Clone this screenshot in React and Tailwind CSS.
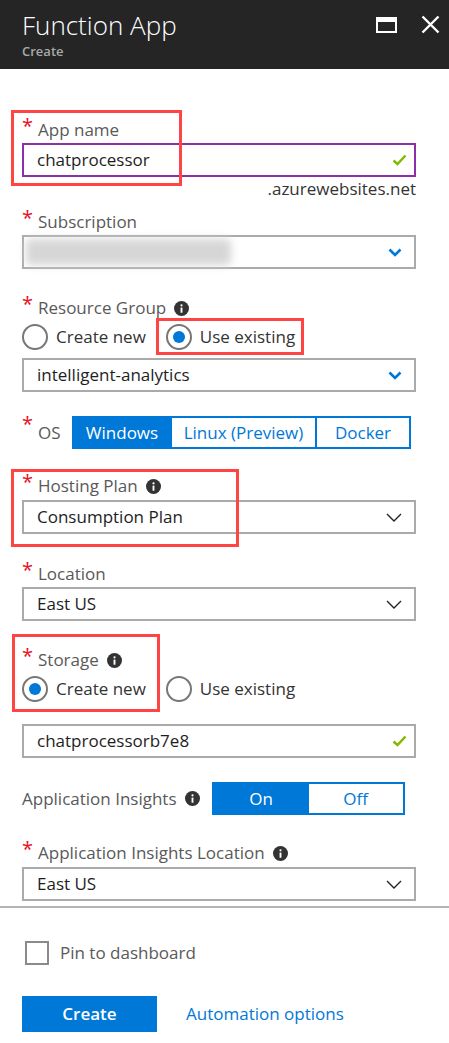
import React from 'react';

const FONT = { fontFamily: '"Segoe UI", "Open Sans", "Noto Sans", sans-serif' };

function Star() {
  return <span className="w-[16px] shrink-0 text-[#e81123] text-[20px] leading-none self-start -mt-[2px]">*</span>;
}

function Info() {
  return (
    <svg width="15" height="15" viewBox="0 0 16 16" className="ml-[8px] shrink-0">
      <circle cx="8" cy="8" r="8" fill="#333" />
      <rect x="7" y="7" width="2" height="5.5" fill="#fff" />
      <circle cx="8" cy="4.6" r="1.2" fill="#fff" />
    </svg>
  );
}

function Check() {
  return (
    <svg width="15" height="12" viewBox="0 0 15 12" className="shrink-0">
      <path d="M1.5 6.5 L5.5 10 L13.5 1.5" fill="none" stroke="#7fba00" strokeWidth="2.4" />
    </svg>
  );
}

function Chevron({ blue }) {
  return blue ? (
    <svg width="14" height="9" viewBox="0 0 14 9" className="shrink-0">
      <path d="M1.5 1.5 L7 7 L12.5 1.5" fill="none" stroke="#0078d7" strokeWidth="2.6" />
    </svg>
  ) : (
    <svg width="16" height="9" viewBox="0 0 16 9" className="shrink-0">
      <path d="M1 1 L8 8 L15 1" fill="none" stroke="#222" strokeWidth="1.4" />
    </svg>
  );
}

function Label({ text, info, star = true }) {
  return (
    <div className="flex items-center h-[24px] text-[17px] text-[#595959]">
      {star && <Star />}
      <span>{text}</span>
      {info && <Info />}
    </div>
  );
}

function Select({ value, blue, blurred }) {
  return (
    <div className="h-[34px] border-2 border-[#aaaaaa] flex items-center pl-[13px] pr-[12px] text-[17px] text-[#1e1e1e]">
      {blurred ? (
        <div className="flex-1 h-full flex items-center -ml-[11px]">
          <div className="h-[26px] w-[205px] bg-[#d6d6d6] blur-[4px] rounded-sm" />
        </div>
      ) : (
        <span className="flex-1">{value}</span>
      )}
      <Chevron blue={blue} />
    </div>
  );
}

function Radio({ on, label }) {
  return (
    <div className="flex items-center">
      <div className="w-[26px] h-[26px] rounded-full border-2 border-[#777] flex items-center justify-center">
        {on && <div className="w-[12px] h-[12px] rounded-full bg-[#0078d7]" />}
      </div>
      <span className="ml-[8px] text-[17px] text-[#333]">{label}</span>
    </div>
  );
}

export default function App() {
  return (
    <div className="w-[449px] h-[1043px] bg-white overflow-hidden" style={FONT}>
      {/* header */}
      <div className="h-[69px] bg-[#252525] flex items-start justify-between pl-[22px] pr-[9px]">
        <div>
          <div className="text-[26px] font-light text-white leading-[30px] mt-[10px]">Function App</div>
          <div className="text-[13px] font-semibold text-[#aaaaaa] leading-[16px] mt-[3px]">Create</div>
        </div>
        <div className="flex items-center gap-[24px] mt-[15px]">
          <div className="w-[21px] h-[16px] border-white border-x-[2px] border-b-[2px] border-t-[5px]" />
          <svg width="19" height="19" viewBox="0 0 19 19">
            <path d="M1.5 1.5 L17.5 17.5 M17.5 1.5 L1.5 17.5" stroke="#fff" strokeWidth="2.4" />
          </svg>
        </div>
      </div>

      <div className="ml-[22px] w-[394px]">
        {/* App name */}
        <div className="relative mt-[49px]">
          <div className="absolute -left-[11px] -top-[8px] w-[171px] h-[76px] border-[3px] border-[#ff4444]" />
          <Label text="App name" />
          <div className="mt-[1px] h-[34px] border-2 border-[#8e2ea8] flex items-center pl-[13px] pr-[7px] text-[17px] text-[#1e1e1e]">
            <span className="flex-1">chatprocessor</span>
            <Check />
          </div>
          <div className="text-right text-[17px] text-[#333] leading-[22px] mt-[1px]">.azurewebsites.net</div>
        </div>

        {/* Subscription */}
        <div className="mt-[10px]">
          <Label text="Subscription" />
          <div className="mt-[1px]">
            <Select blurred blue />
          </div>
        </div>

        {/* Resource group */}
        <div className="mt-[27px]">
          <Label text="Resource Group" info />
          <div className="flex items-center gap-[20px] h-[32px] mt-[1px]">
            <Radio label="Create new" />
            <div className="relative">
              <div className="absolute -left-[10px] -top-[6px] w-[148px] h-[37px] border-[3px] border-[#ff4444]" />
              <Radio on label="Use existing" />
            </div>
          </div>
          <div className="mt-[5px]">
            <Select value="intelligent-analytics" blue />
          </div>
        </div>

        {/* OS */}
        <div className="mt-[24px] flex items-center h-[33px]">
          <Star />
          <span className="text-[17px] text-[#595959] w-[34px]">OS</span>
          <div className="flex h-[33px] text-[17px]">
            <div className="w-[100px] bg-[#0078d7] text-white flex items-center justify-center border-2 border-[#0078d7]">Windows</div>
            <div className="w-[143px] text-[#0078d7] flex items-center justify-center border-y-2 border-[#0078d7]">Linux (Preview)</div>
            <div className="w-[96px] text-[#0078d7] flex items-center justify-center border-2 border-[#0078d7]">Docker</div>
          </div>
        </div>

        {/* Hosting plan */}
        <div className="relative mt-[25px]">
          <div className="absolute -left-[11px] -top-[5px] w-[228px] h-[78px] border-[3px] border-[#ff4444]" />
          <Label text="Hosting Plan" info />
          <div className="mt-[2px]">
            <Select value="Consumption Plan" />
          </div>
        </div>

        {/* Location */}
        <div className="mt-[28px]">
          <Label text="Location" />
          <div className="mt-[1px]">
            <Select value="East US" />
          </div>
        </div>

        {/* Storage */}
        <div className="relative mt-[27px]">
          <div className="absolute -left-[10px] -top-[14px] w-[148px] h-[78px] border-[3px] border-[#ff4444]" />
          <Label text="Storage" info />
          <div className="flex items-center gap-[20px] h-[32px] mt-[1px]">
            <Radio on label="Create new" />
            <Radio label="Use existing" />
          </div>
          <div className="mt-[19px] h-[34px] border-2 border-[#aaaaaa] flex items-center pl-[13px] pr-[7px] text-[17px] text-[#1e1e1e]">
            <span className="flex-1">chatprocessorb7e8</span>
            <Check />
          </div>
        </div>

        {/* Application Insights */}
        <div className="mt-[24px] flex items-center h-[33px]">
          <span className="text-[17px] text-[#595959]">Application Insights</span>
          <Info />
          <div className="ml-[12px] flex h-[33px] text-[17px] border-2 border-[#0078d7]">
            <div className="w-[95px] bg-[#0078d7] text-white flex items-center justify-center">On</div>
            <div className="w-[94px] text-[#0078d7] flex items-center justify-center">Off</div>
          </div>
        </div>

        {/* AI Location */}
        <div className="mt-[26px]">
          <Label text="Application Insights Location" info />
          <div className="mt-[2px]">
            <Select value="East US" />
          </div>
        </div>
      </div>

      {/* footer */}
      <div className="mt-[5px] border-t-2 border-[#b4b4b4] px-[22px]">
        <div className="flex items-center mt-[32px] ml-[3px]">
          <div className="w-[24px] h-[24px] border-2 border-[#8a8a8a]" />
          <span className="ml-[11px] text-[17px] text-[#595959]">Pin to dashboard</span>
        </div>
        <div className="flex items-center mt-[30px]">
          <div className="w-[135px] h-[36px] bg-[#0078d7] text-white text-[17px] font-semibold flex items-center justify-center">Create</div>
          <span className="ml-[29px] text-[17px] text-[#0078d7]">Automation options</span>
        </div>
      </div>
    </div>
  );
}
